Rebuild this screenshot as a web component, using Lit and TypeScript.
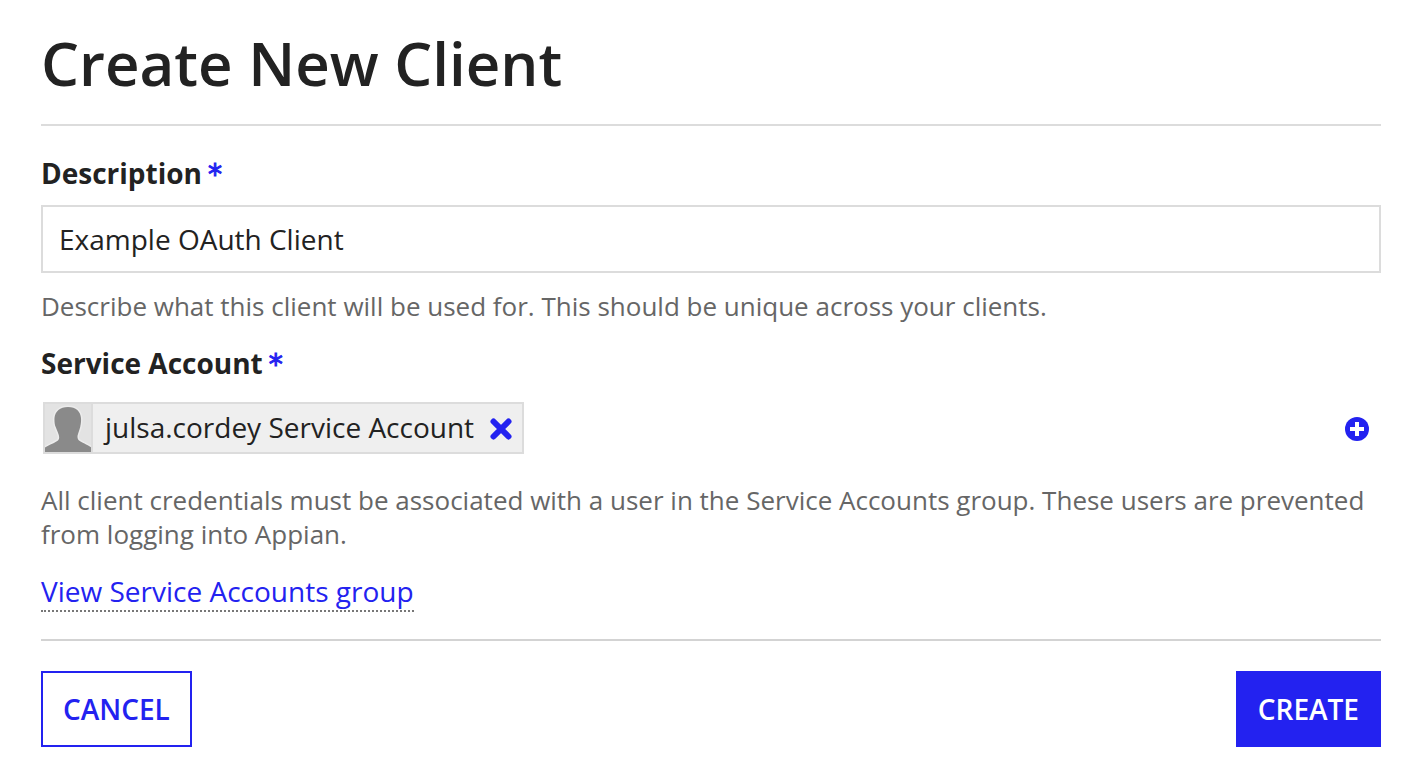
import { LitElement, html, css } from "lit";
import { customElement } from "lit/decorators.js";

@customElement("app-root")
export class AppRoot extends LitElement {
  static styles = css`
    :host {
      display: block;
      background: #fff;
      color: #222;
      font-family: "Open Sans", "Noto Sans", sans-serif;
      font-size: 28px;
      line-height: 38px;
    }
    * { box-sizing: border-box; }
    .dialog { padding: 23px 47px 28px 41px; }
    h1 {
      margin: 0;
      padding-bottom: 21px;
      border-bottom: 2px solid #dcdcdc;
      font-size: 60px;
      line-height: 80px;
      font-weight: 600;
    }
    .label { display: flex; align-items: baseline; gap: 6px; font-weight: 700; }
    .star {
      color: #2322f0;
      font-family: "DejaVu Sans", sans-serif;
      font-weight: 400;
      line-height: 28px;
      -webkit-text-stroke: 1px #2322f0;
    }
    .field { padding-top: 28px; }
    .account { padding-top: 21px; }
    .text {
      display: block;
      width: 100%;
      height: 68px;
      margin-top: 13px;
      padding: 0 16px;
      border: 2px solid #dcdcdc;
      border-radius: 0;
      font: inherit;
      color: inherit;
      background: #fff;
      outline: none;
    }
    .hint { margin: 0; font-size: 26px; line-height: 34px; color: #666; }
    .field .hint { padding-top: 16px; }
    .picker {
      display: flex;
      align-items: center;
      justify-content: space-between;
      padding: 20px 12px 29px 2px;
    }
    .chip {
      display: flex;
      align-items: center;
      height: 52px;
      border: 2px solid #dcdcdc;
      background: #efefef;
    }
    .avatar { display: block; width: 48px; height: 48px; border-right: 2px solid #dcdcdc; }
    .name { padding: 0 16px 2px 12px; }
    .icon {
      display: block;
      padding: 0;
      border: 0;
      background: none;
      color: #2322f0;
      cursor: pointer;
    }
    .icon svg { display: block; }
    .chip .icon { margin: 2px 10px 0 0; }
    .picker > .icon { margin-top: 2px; }
    .linkrow { padding: 21px 0 27px; border-bottom: 2px solid #d3d3d3; }
    a {
      display: inline-block;
      color: #2322f0;
      text-decoration: none;
      border-bottom: 2px dotted #777;
    }
    .actions { display: flex; justify-content: space-between; padding-top: 30px; }
    .btn {
      height: 76px;
      padding: 0 20px;
      border: 2px solid #2322f0;
      background: #fff;
      color: #2322f0;
      font: inherit;
      font-weight: 600;
      text-transform: uppercase;
      cursor: pointer;
    }
    .primary { background: #2322f0; color: #fff; }
  `;

  render() {
    return html`
      <form class="dialog" @submit=${(e: Event) => e.preventDefault()}>
        <h1>Create New Client</h1>
        <div class="field">
          <label class="label" for="description">Description <span class="star">*</span></label>
          <input class="text" id="description" type="text" value="Example OAuth Client" required />
          <p class="hint">Describe what this client will be used for. This should be unique across your clients.</p>
        </div>
        <div class="account" role="group" aria-labelledby="account-label">
          <span class="label" id="account-label">Service Account <span class="star">*</span></span>
          <div class="picker">
            <div class="chip">
              <svg class="avatar" viewBox="0 0 46 48" preserveAspectRatio="none" aria-hidden="true">
                <rect width="46" height="48" fill="#e3e3e3" />
                <path fill="#8a8a8a" stroke="#ececec" stroke-width="3" paint-order="stroke" d="M23 3C15 3 10 7.500 9.500 14c-.2 4 .3 7 1.200 9 1 3 2.300 5 3.100 8 .5 2 .7 4-.8 5.500C10 39 3 41-2 45v6h50v-6c-4-4-11-6-14-8.500-1.500-1.500-1.800-3.500-1.300-5.500.8-3 1.800-5 2.500-8 .6-3 1-5 .8-9C35.500 7.500 31 3 23 3z" />
              </svg>
              <span class="name">julsa.cordey Service Account</span>
              <button class="icon" type="button" aria-label="Remove">
                <svg width="22" height="22" viewBox="0 0 22 22"><path d="M3.500 3.500l15 15M18.500 3.500l-15 15" stroke="currentColor" stroke-width="6" stroke-linecap="round" /></svg>
              </button>
            </div>
            <button class="icon" type="button" aria-label="Add">
              <svg width="24" height="24" viewBox="0 0 24 24"><circle cx="12" cy="12" r="12" fill="currentColor" /><path d="M12 5v14M5 12h14" stroke="#fff" stroke-width="4" /></svg>
            </button>
          </div>
          <p class="hint">All client credentials must be associated with a user in the Service Accounts group. These users are prevented from logging into Appian.</p>
        </div>
        <div class="linkrow"><a href="#service-accounts">View Service Accounts group</a></div>
        <div class="actions">
          <button class="btn" type="button">Cancel</button>
          <button class="btn primary" type="submit">Create</button>
        </div>
      </form>
    `;
  }
}
